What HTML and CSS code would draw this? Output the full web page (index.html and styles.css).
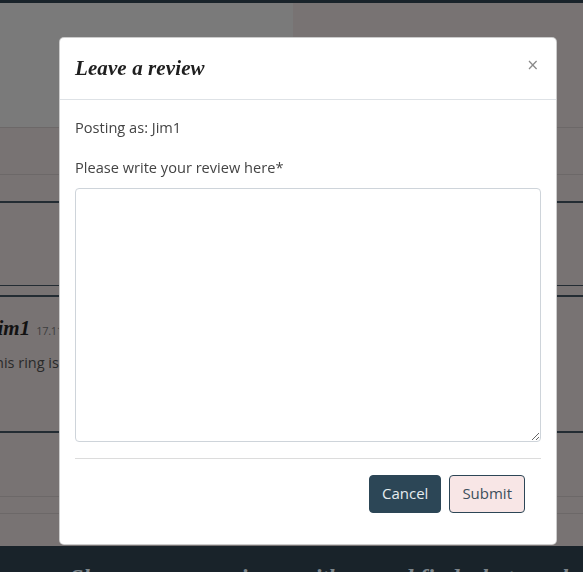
FILE: index.html
```html
<!DOCTYPE html>
<html lang="en">
<head>
<meta charset="utf-8">
<title>Leave a review</title>
<link rel="stylesheet" href="styles.css">
</head>
<body>
<div class="page">
  <div class="topbar"></div>
  <div class="hero">
    <div class="hero-left"></div>
    <div class="hero-right"></div>
  </div>
  <div class="band band-a"></div>
  <div class="band band-b"></div>
  <div class="band band-c"></div>
  <div class="review-card">
    <div class="review-head">
      <span class="review-user">Jim1</span>
      <span class="review-date">17.11.2020</span>
    </div>
    <p class="review-text">This ring is beautiful</p>
  </div>
  <div class="band band-d"></div>
  <div class="band band-e"></div>
  <div class="band band-f"></div>
  <footer class="footer">
    <p class="footer-text">Share your experience with us and find what you love</p>
  </footer>
</div>

<div class="modal">
  <div class="modal-header">
    <h5 class="modal-title">Leave a review</h5>
    <button class="close" type="button" aria-label="Close">&times;</button>
  </div>
  <form class="modal-body">
    <p class="posting">Posting as: Jim1</p>
    <label class="field-label" for="review">Please write your review here*</label>
    <textarea class="field" id="review"></textarea>
    <hr class="divider">
    <div class="actions">
      <button class="btn btn-cancel" type="button">Cancel</button>
      <button class="btn btn-submit" type="submit">Submit</button>
    </div>
  </form>
</div>
</body>
</html>
```
FILE: styles.css
```css
html, body {
  margin: 0;
  padding: 0;
}
body {
  background: #787373;
  font-family: "Open Sans", "Noto Sans", sans-serif;
  overflow: hidden;
  height: 572px;
}
.page {
  display: flex;
  flex-direction: column;
}
.topbar {
  height: 3px;
  background: #19232a;
}
.hero {
  display: grid;
  grid-template-columns: 293px 1fr;
  height: 124px;
  border-bottom: 1px solid #6c6868;
}
.hero-left { background: #7a7a7a; }
.hero-right { background: #787373; }
.band { box-sizing: border-box; }
.band-a {
  height: 47px;
  border-bottom: 1px solid #6c6868;
}
.band-b {
  height: 28px;
  border-bottom: 2px solid #232c33;
}
.band-c {
  height: 83px;
  border-bottom: 1px solid #232c33;
  margin-bottom: 9px;
}
.review-card {
  border-top: 2px solid #232c33;
  border-bottom: 2px solid #232c33;
  height: 138px;
  box-sizing: border-box;
  padding: 19px 0 0 0;
  margin-left: -13px;
}
.review-head {
  display: flex;
  align-items: baseline;
  gap: 6px;
}
.review-user {
  font-family: "Liberation Serif", serif;
  font-style: italic;
  font-weight: bold;
  font-size: 21px;
  color: #121212;
}
.review-date {
  font-size: 11px;
  color: #3e3e3e;
  letter-spacing: -0.3px;
}
.review-text {
  margin: 12px 0 0;
  font-size: 14.5px;
  color: #2a2a2a;
}
.band-d {
  height: 64px;
  border-bottom: 1px solid #6c6868;
}
.band-e {
  height: 17px;
  border-bottom: 1px solid #6c6868;
}
.band-f {
  height: 32px;
}
.footer {
  background: #19232a;
  height: 40px;
  padding: 17px 0 0 70px;
  box-sizing: border-box;
  overflow: hidden;
}
.footer-text {
  margin: 0;
  font-family: "Liberation Serif", serif;
  font-style: italic;
  font-weight: bold;
  font-size: 24px;
  line-height: 28px;
  color: #7d858b;
  white-space: nowrap;
}

/* modal */
.modal {
  position: fixed;
  left: 59px;
  top: 37px;
  width: 498px;
  height: 508px;
  background: #fff;
  border-radius: 5px;
  border: 1px solid rgba(0,0,0,0.2);
  box-sizing: border-box;
  display: flex;
  flex-direction: column;
  color: #444;
}
.modal-header {
  display: flex;
  align-items: center;
  justify-content: space-between;
  height: 62px;
  padding: 0 17px 0 15px;
  border-bottom: 1px solid #dee2e6;
  box-sizing: border-box;
}
.modal-title {
  margin: 0;
  font-family: "Liberation Serif", serif;
  font-style: italic;
  font-weight: bold;
  font-size: 21px;
  color: #1f1f1f;
  letter-spacing: 0.1px;
}
.close {
  border: 0;
  background: none;
  padding: 0 0 6px 0;
  font-size: 15px;
  line-height: 1;
  color: #8a8a8a;
  font-family: "DejaVu Sans", sans-serif;
}
.modal-body {
  display: flex;
  flex-direction: column;
  padding: 15px 15px 16px 15px;
}
.posting {
  margin: 0 0 16px;
  font-size: 14.6px;
  line-height: 24px;
}
.field-label {
  font-size: 14.6px;
  line-height: 24px;
  margin-bottom: 9px;
}
.field {
  height: 254px;
  border: 1px solid #ced4da;
  border-radius: 4px;
  box-sizing: border-box;
  font: inherit;
  background: #fff;
}
.divider {
  margin: 16px 0;
  border: 0;
  border-top: 1px solid #dcdcdc;
}
.actions {
  display: flex;
  justify-content: flex-end;
  gap: 8px;
  padding-right: 16px;
}
.btn {
  height: 38px;
  border-radius: 4px;
  font-family: "Open Sans", sans-serif;
  font-size: 15px;
  line-height: 1;
  padding: 0 12px 1px;
  box-sizing: border-box;
}
.btn-cancel {
  background: #2c4656;
  border: 1px solid #2c4656;
  color: #e6ecef;
}
.btn-submit {
  background: #f8e6e6;
  border: 1px solid #2c4656;
  color: #3d4f5c;
}
```
